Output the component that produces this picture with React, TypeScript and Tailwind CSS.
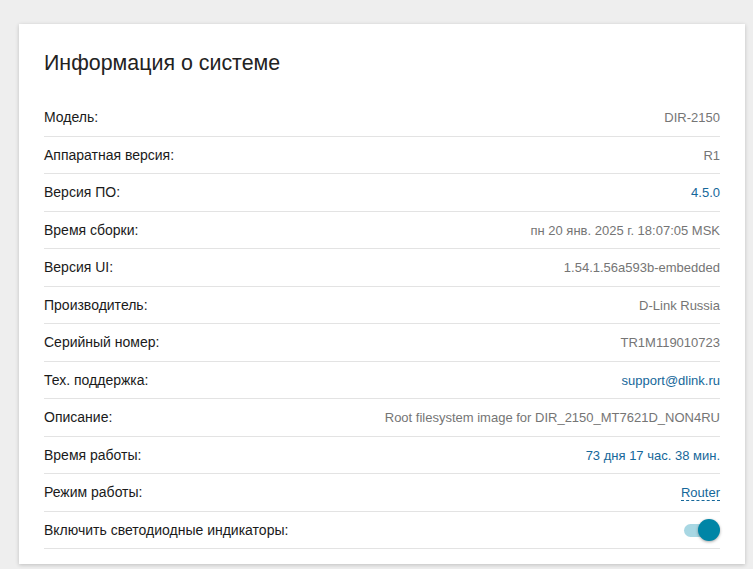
import React from "react";

interface Row {
    label: string;
    value: string;
    kind?: "muted" | "link" | "mode" | "toggle";
}

const rows: Row[] = [
    {label: "Модель:", value: "DIR-2150"},
    {label: "Аппаратная версия:", value: "R1"},
    {label: "Версия ПО:", value: "4.5.0", kind: "link"},
    {label: "Время сборки:", value: "пн 20 янв. 2025 г. 18:07:05 MSK"},
    {label: "Версия UI:", value: "1.54.1.56a593b-embedded"},
    {label: "Производитель:", value: "D-Link Russia"},
    {label: "Серийный номер:", value: "TR1M119010723"},
    {label: "Тех. поддержка:", value: "support@dlink.ru", kind: "link"},
    {label: "Описание:", value: "Root filesystem image for DIR_2150_MT7621D_NON4RU"},
    {label: "Время работы:", value: "73 дня 17 час. 38 мин.", kind: "link"},
    {label: "Режим работы:", value: "Router", kind: "mode"},
    {label: "Включить светодиодные индикаторы:", value: "", kind: "toggle"},
];

function Toggle() {
    return (
        <div className="relative w-[36px] h-[22px] flex items-center">
            <div className="w-[34px] h-[13px] rounded-full bg-[#a8d7e3]"/>
            <div className="absolute right-0 top-0 w-[22px] h-[22px] rounded-full bg-[#0085a6] shadow-[0_1px_3px_rgba(0,0,0,0.35)]"/>
        </div>
    );
}

export default function App() {
    return (
        <div className="min-h-[569px] bg-[#eeeeee] pt-[24px] pl-[19px] pr-[8px] font-['Liberation_Sans',Arial,sans-serif]">
            <div className="bg-white shadow-[0_1px_4px_rgba(0,0,0,0.2)] px-[25px] pb-[15px]">
                <h1 className="pt-[25px] h-[75px] text-[21.4px] leading-[28px] text-[#222222]">
                    Информация о системе
                </h1>
                <div>
                    {rows.map((row, i) => (
                        <div
                            key={i}
                            className="flex items-center justify-between h-[37.5px] pt-[1px] border-b border-[#e3e3e3] text-[14px]"
                        >
                            <span className="text-[#1a1a1a]">{row.label}</span>
                            {row.kind === "toggle" ? (
                                <Toggle/>
                            ) : row.kind === "link" ? (
                                <span className="text-[#15679a] text-[13px]">{row.value}</span>
                            ) : row.kind === "mode" ? (
                                <span className="text-[#15679a] text-[13px] border-b border-dashed border-[#15679a] leading-[15px]">
                                    {row.value}
                                </span>
                            ) : (
                                <span className="text-[#757575] text-[13px]">{row.value}</span>
                            )}
                        </div>
                    ))}
                </div>
            </div>
        </div>
    );
}
